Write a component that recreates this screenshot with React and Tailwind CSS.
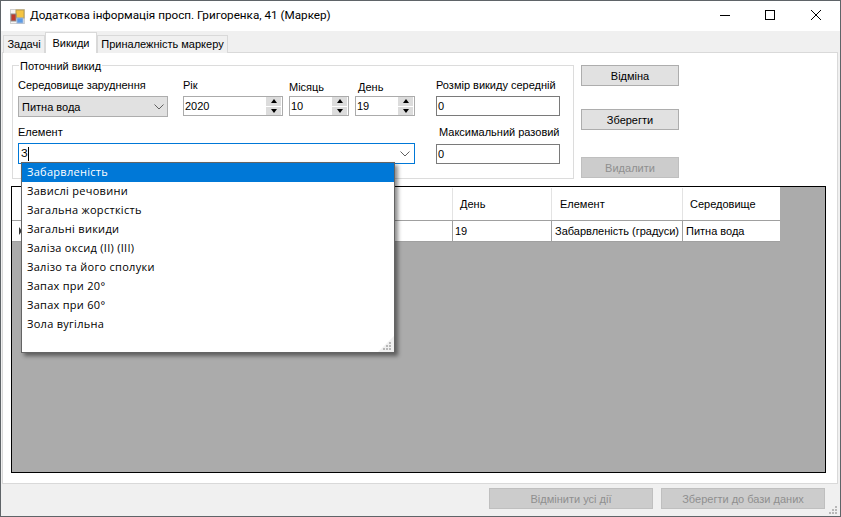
import React from "react";

const items = [
  "Забарвленість",
  "Завислі речовини",
  "Загальна жорсткість",
  "Загальні викиди",
  "Заліза оксид (II) (III)",
  "Залізо та його сполуки",
  "Запах при 20°",
  "Запах при 60°",
  "Зола вугільна",
];

const Chevron = () => (
  <svg width="10" height="6" viewBox="0 0 10 6" className="text-[#606060]">
    <path d="M0.5 0.5 L5 5 L9.5 0.5" fill="none" stroke="currentColor" strokeWidth="1" />
  </svg>
);

const Grip = ({ triangle }) => (
  <svg width="17" height="17" viewBox="0 0 17 17" className="block">
    {triangle && <polygon points="17,1 17,17 1,17" fill="#f0f0f0" />}
    <g fill="#b8b8b8">
      <rect x="12" y="7" width="2" height="2" />
      <rect x="9" y="10" width="2" height="2" />
      <rect x="12" y="10" width="2" height="2" />
      <rect x="6" y="13" width="2" height="2" />
      <rect x="9" y="13" width="2" height="2" />
      <rect x="12" y="13" width="2" height="2" />
    </g>
  </svg>
);

const Spinner = ({ value, className }) => (
  <div className={`h-5 flex items-center border border-[#ababab] bg-white pl-[1px] ${className}`}>
    <span className="flex-1 leading-none">{value}</span>
    <div className="w-[15px] h-[18px] mr-[1px] flex flex-col gap-[1px]">
      <div className="flex-1 bg-[#dcdcdc] flex items-center justify-center">
        <div className="w-0 h-0 border-x-[3.5px] border-x-transparent border-b-[4px] border-b-black" />
      </div>
      <div className="flex-1 bg-[#dcdcdc] flex items-center justify-center">
        <div className="w-0 h-0 border-x-[3.5px] border-x-transparent border-t-[4px] border-t-black" />
      </div>
    </div>
  </div>
);

const Btn = ({ children, disabled, className = "" }) => (
  <div
    className={`h-[21px] pt-[1px] flex items-center justify-center border ${
      disabled
        ? "bg-[#cccccc] border-[#bfbfbf] text-[#8f8f8f]"
        : "bg-[#e1e1e1] border-[#adadad] text-black"
    } ${className}`}
  >
    {children}
  </div>
);

const App = () => {
  return (
    <div className="relative w-[841px] h-[517px] flex flex-col bg-[#f0f0f0] border border-[#5f6468] overflow-hidden font-['Liberation_Sans',sans-serif] text-[11px] text-black">
      {/* Title bar */}
      <div className="h-[30px] shrink-0 bg-white flex items-center">
        <svg width="15" height="15" viewBox="0 0 15 15" className="ml-[9px]">
          <rect x="0.5" y="0.5" width="14" height="14" fill="#f4f4f4" stroke="#d0d0d0" />
          <rect x="6" y="1" width="8" height="8" fill="#f5c542" stroke="#b89a4a" />
          <rect x="1" y="5" width="5" height="7" fill="#c0392b" stroke="#8a8a8a" />
          <rect x="7" y="9" width="6" height="5" fill="#5b9be6" stroke="#9ab4d8" />
        </svg>
        <span className="ml-[5px] font-['Roboto',sans-serif] text-[11.7px] text-black">
          Додаткова інформація просп. Григоренка, 41 (Маркер)
        </span>
        <div className="ml-auto flex items-center">
          <svg width="46" height="30" viewBox="0 0 46 30">
            <rect x="18" y="14" width="10" height="1" fill="#000" />
          </svg>
          <svg width="46" height="30" viewBox="0 0 46 30">
            <rect x="17.5" y="9.5" width="9" height="9" fill="none" stroke="#000" />
          </svg>
          <svg width="46" height="30" viewBox="0 0 46 30">
            <path d="M17 9 L27 19 M27 9 L17 19" stroke="#000" strokeWidth="1" fill="none" />
          </svg>
        </div>
      </div>

      {/* Tabs */}
      <div className="h-[21px] shrink-0 flex items-end pl-[2px] relative z-[1]">
        <div className="h-[18px] w-[42px] mb-[-1px] flex items-center justify-center border border-[#d9d9d9] border-b-0 bg-[#f0f0f0] whitespace-nowrap">
          Задачі
        </div>
        <div className="h-[21px] w-[52px] mb-[-1px] flex items-center justify-center border border-[#d9d9d9] border-b-0 bg-white whitespace-nowrap">
          Викиди
        </div>
        <div className="h-[18px] w-[131px] mb-[-1px] flex items-center justify-center border border-[#d9d9d9] border-b-0 bg-[#f0f0f0] whitespace-nowrap">
          Приналежність маркеру
        </div>
      </div>

      {/* Tab page */}
      <div className="h-[432px] shrink-0 ml-[1px] mr-[2px] border border-[#d9d9d9] bg-white pl-[8px] pt-[12px] flex flex-col">
        <div className="flex items-start">
          {/* Group box */}
          <div className="relative w-[562px] h-[114px] ml-[1px] border border-[#dcdcdc] px-[5px]">
            <span className="absolute left-[6px] top-[-7px] bg-white px-[1px] leading-[14px]">Поточний викид</span>

            <div className="flex mt-[12px]">
              <div className="w-[150px]">
                <div className="h-[14px] leading-[14px] whitespace-nowrap">Середовище заруднення</div>
                <div className="mt-[4px] h-[21px] pt-[1px] flex items-center justify-between border border-[#adadad] bg-[#e1e1e1] pl-[3px] pr-[3px]">
                  <span>Питна вода</span>
                  <Chevron />
                </div>
              </div>
              <div className="w-[100px] ml-[15px]">
                <div className="h-[14px] leading-[14px]">Рік</div>
                <Spinner value="2020" className="mt-[4px]" />
              </div>
              <div className="w-[60px] ml-[6px]">
                <div className="h-[14px] leading-[14px] mt-[2px]">Місяць</div>
                <Spinner value="10" className="mt-[2px]" />
              </div>
              <div className="w-[60px] ml-[6px]">
                <div className="h-[14px] leading-[14px] mt-[2px] pl-[3px]">День</div>
                <Spinner value="19" className="mt-[2px]" />
              </div>
              <div className="w-[124px] ml-[21px]">
                <div className="h-[14px] leading-[14px] whitespace-nowrap">Розмір викиду середній</div>
                <div className="mt-[4px] h-5 flex items-center border border-[#7a7a7a] pl-[1px]">0</div>
              </div>
            </div>

            <div className="flex mt-[8px]">
              <div className="relative w-[397px]">
                <div className="h-[14px] leading-[14px]">Елемент</div>
                <div className="mt-[4px] h-[21px] flex items-center justify-between border border-[#0078d7] pl-[2px] pr-[4px]">
                  <span className="flex items-center">
                    З<span className="w-[1px] h-[14px] bg-black" />
                  </span>
                  <Chevron />
                </div>

                {/* Autocomplete popup */}
                <div className="absolute left-[3px] top-[37px] z-10 w-[374px] h-[191px] border border-[#646464] bg-white shadow-[3px_3px_4px_rgba(0,0,0,0.45)] font-['Open_Sans',sans-serif] tracking-[0.28px]">
                  {items.map((item, idx) => (
                    <div
                      key={item}
                      className={`h-[19px] pl-[5px] flex items-center ${
                        idx === 0 ? "bg-[#0078d7] text-white" : ""
                      }`}
                    >
                      {item}
                    </div>
                  ))}
                  <div className="absolute right-0 bottom-0">
                    <Grip triangle />
                  </div>
                </div>
              </div>
              <div className="w-[124px] ml-[21px]">
                <div className="h-[14px] leading-[14px] pl-[3px] whitespace-nowrap">Максимальний разовий</div>
                <div className="mt-[5px] h-5 flex items-center border border-[#7a7a7a] pl-[1px]">0</div>
              </div>
            </div>
          </div>

          {/* Side buttons */}
          <div className="w-[98px] ml-[7px] flex flex-col">
            <Btn>Відміна</Btn>
            <Btn className="mt-[23px]">Зберегти</Btn>
            <Btn disabled className="mt-[27px]">Видалити</Btn>
          </div>
        </div>

        {/* Data grid */}
        <div className="w-[815px] h-[287px] mt-[7px] border border-black bg-[#ababab]">
          <div className="w-[768px] bg-white">
            <div className="h-[34px] pt-[1px] flex border-b border-[#a0a0a0]">
              <div className="flex-1 border-r border-[#e3e3e3]" />
              <div className="w-[99px] flex items-center pl-[7px] border-r border-[#e3e3e3]">День</div>
              <div className="w-[131px] flex items-center pl-[8px] border-r border-[#e3e3e3]">Елемент</div>
              <div className="w-[97px] flex items-center pl-[7px]">Середовище</div>
            </div>
            <div className="h-[21px] flex border-b border-[#a0a0a0]">
              <div className="flex-1 flex items-center pl-[7px] border-r border-[#a0a0a0]">
                <div className="w-0 h-0 border-y-[4px] border-y-transparent border-l-[3px] border-l-[#333333]" />
              </div>
              <div className="w-[99px] pt-[1px] flex items-center pl-[2px] border-r border-[#a0a0a0]">19</div>
              <div className="w-[131px] pt-[1px] flex items-center pl-[3px] border-r border-[#a0a0a0] whitespace-nowrap">Забарвленість (градуси)</div>
              <div className="w-[97px] pt-[1px] flex items-center pl-[3px]">Питна вода</div>
            </div>
          </div>
        </div>
      </div>

      {/* Bottom bar */}
      <div className="flex-1 relative flex justify-end items-start pt-[4px] pr-[15px] gap-[8px]">
        <Btn disabled className="w-[164px]">Відмінити усі дії</Btn>
        <Btn disabled className="w-[164px]">Зберегти до бази даних</Btn>
        <div className="absolute right-0 bottom-0">
          <Grip />
        </div>
      </div>
    </div>
  );
};

export default App;
